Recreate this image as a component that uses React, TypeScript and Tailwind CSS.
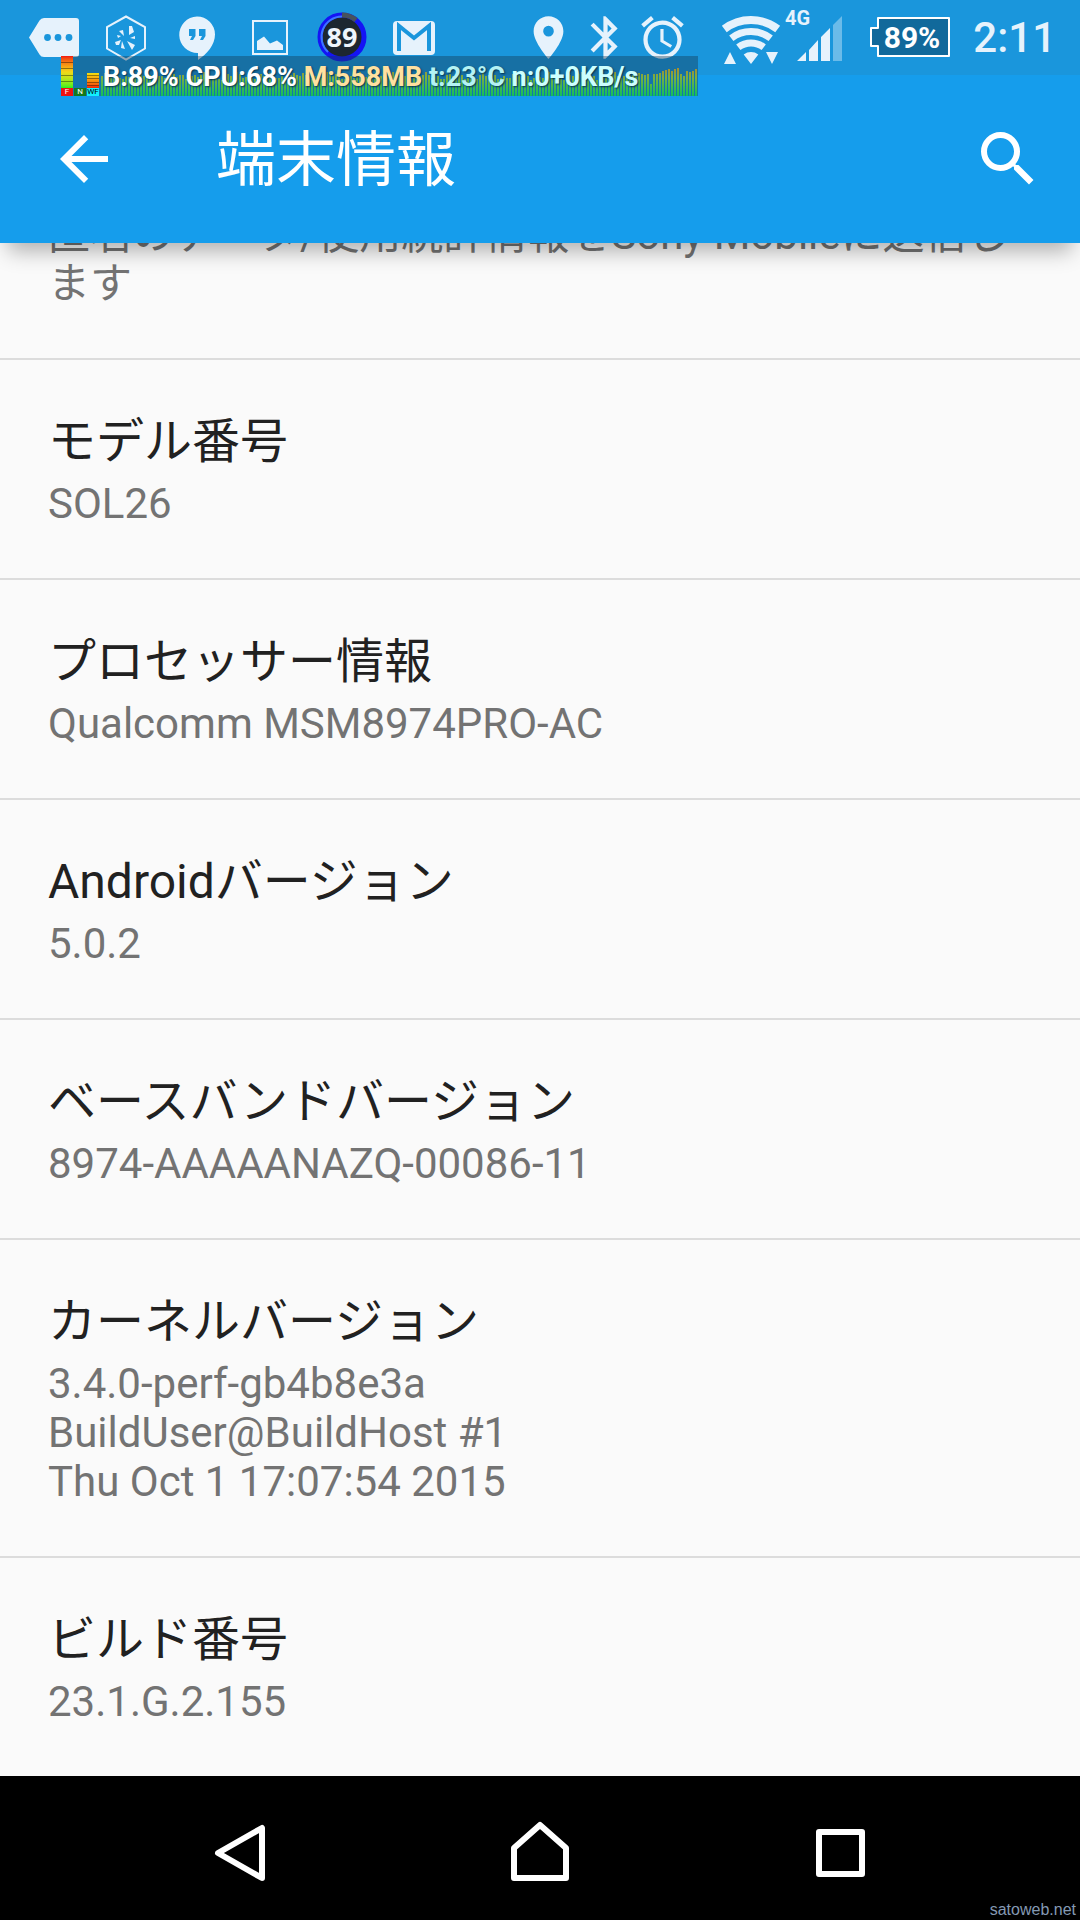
import { MdAlarm, MdArrowBack, MdBluetooth, MdLocationOn, MdSearch } from "react-icons/md";

const items = [
    { title: "モデル番号", lines: ["SOL26"] },
    { title: "プロセッサー情報", lines: ["Qualcomm MSM8974PRO-AC"] },
    { title: "Androidバージョン", lines: ["5.0.2"] },
    { title: "ベースバンドバージョン", lines: ["8974-AAAAANAZQ-00086-11"] },
    {
        title: "カーネルバージョン",
        lines: [
            "3.4.0-perf-gb4b8e3a",
            "BuildUser@BuildHost #1",
            "Thu Oct 1 17:07:54 2015",
        ],
    },
    { title: "ビルド番号", lines: ["23.1.G.2.155"] },
];

// cpu history, newest samples last
const recent = [
    20, 21, 21, 22, 22, 23, 22, 21, 22, 12, 22, 22, 23, 25, 26, 27, 25, 27, 28,
    22, 20, 25, 24, 25, 27,
];
const history = Array.from({ length: 174 }, (_, i) =>
    Math.round(20 + 2 * Math.sin(i * 1.7) + 2 * Math.sin(i * 0.6))
).concat(recent);

function Notifications() {
    return (
        <div className="flex pl-[18px] text-[#e6f2fc]">
            <svg width="72" height="75" fill="currentColor">
                <path d="M11 37.500 21.500 20.500Q23 18 26 18H58Q61 18 61 21V54Q61 57 58 57H26Q23 57 21.500 54.500Z" />
                <g fill="#1a96dc">
                    <circle cx="29.500" cy="37.500" r="3.400" />
                    <circle cx="40" cy="37.500" r="3.400" />
                    <circle cx="51" cy="37.500" r="3.400" />
                </g>
            </svg>
            <svg width="72" height="75" fill="currentColor">
                <path
                    d="M36 16.500 55 27V48.500L36 59.500 17 48.500V27Z"
                    fill="none"
                    stroke="currentColor"
                    strokeWidth="2"
                />
                <path d="M39 26H42L44 32 39 35ZM29 31 33 30 34 36ZM40 38 45 36V39ZM37 41 45 45 42 50ZM32 41 35 49 31 48ZM25 42 31 40 29 45H26ZM27 35 31 36 28 38Z" />
            </svg>
            <svg width="72" height="75" fill="currentColor">
                <path d="M35 16.500a18 18 0 0 1 18 18C53 45 45 54 36 60V53A18 18 0 0 1 35 16.500Z" />
                <path
                    fill="#1a96dc"
                    d="M27 29H33.500V36L31 40H28L30 36H27ZM37 29H43.500V36L41 40H38L40 36H37Z"
                />
            </svg>
            <svg width="72" height="75" fill="currentColor">
                <rect
                    x="19"
                    y="21"
                    width="34"
                    height="33"
                    fill="none"
                    stroke="currentColor"
                    strokeWidth="2"
                />
                <path d="M23 50V41L30 36.500 36 43.500 43 40.500 49 45V50Z" />
            </svg>
            <svg width="72" height="75">
                <circle cx="36" cy="37" r="22" fill="#1d2730" stroke="#1414f5" strokeWidth="5" />
                <path
                    d="M22 52A20.500 20.500 0 0 1 36 16.500"
                    fill="none"
                    stroke="#3c78ff"
                    strokeWidth="2"
                />
                <path
                    d="M36 15A22 22 0 0 1 50 20"
                    fill="none"
                    stroke="#47525c"
                    strokeWidth="5"
                />
                <text
                    x="36"
                    y="47"
                    textAnchor="middle"
                    className="fill-[#eef5fc] font-['Open_Sans',sans-serif] text-[27px] font-bold"
                >
                    89
                </text>
            </svg>
            <svg width="72" height="75" fill="currentColor">
                <rect x="15" y="21" width="42" height="34" rx="4" />
                <path
                    d="M21 51V26L36 38 51 26V51"
                    fill="none"
                    stroke="#1a96dc"
                    strokeWidth="4"
                />
            </svg>
        </div>
    );
}

function SystemIcons() {
    return (
        <div className="flex items-center pr-6 text-[#e6f2fc]">
            <div className="flex gap-1.5">
                <MdLocationOn size={51} />
                <MdBluetooth size={51} />
                <MdAlarm size={51} />
            </div>
            <svg width="66" height="75" fill="currentColor" className="ml-7">
                <g fill="none" stroke="currentColor">
                    <path d="M8.300 29A44 44 0 0 1 61.700 29" strokeWidth="8" />
                    <path d="M15.300 38.200A32.500 32.500 0 0 1 54.700 38.200" strokeWidth="7" />
                    <path d="M22.300 47.300A21 21 0 0 1 47.700 47.300" strokeWidth="7" />
                </g>
                <path d="M35 64 27.700 54.500A12 12 0 0 1 42.300 54.500ZM14 52 20 64H8ZM50 52H62L56 64Z" />
            </svg>
            <svg width="64" height="75" fill="currentColor">
                <text x="3" y="25" className="text-[20px] font-bold">
                    4G
                </text>
                <path d="M15 61 24 52V61ZM27 50 36 40V61H27ZM39 37 48 28V61H39Z" />
                <path d="M51 25 60 16V61H51Z" opacity="0.4" />
            </svg>
            <svg width="88" height="75" className="ml-5">
                <path
                    d="M12 18H83V56H12V46H5V28H12Z"
                    fill="#11699b"
                    stroke="white"
                    strokeWidth="2"
                    strokeLinejoin="round"
                />
                <text
                    x="46"
                    y="48"
                    textAnchor="middle"
                    className="fill-white text-[30px] font-bold"
                >
                    89%
                </text>
            </svg>
            <time className="ml-[19px] text-[42px] leading-[49px] font-medium">2:11</time>
        </div>
    );
}

function Meter({ label, bar, tag }: { label: string; bar: string; tag: string }) {
    return (
        <div className="flex w-3 flex-col justify-end">
            <div className={`flex flex-col justify-evenly ${bar}`}>
                {bar && [0, 1, 2, 3].map((i) => <div key={i} className="h-px bg-black/40" />)}
            </div>
            <div className={`flex h-2 justify-center text-[8px] leading-2 ${tag}`}>{label}</div>
        </div>
    );
}

function Monitor() {
    return (
        <div className="absolute top-14 left-[61px] flex h-10 gap-px bg-[#153850]/40">
            <Meter
                label="F"
                bar="h-8 bg-linear-to-b from-[#f01010] via-[#f0d818] to-[#10f020]"
                tag="bg-[#ee1111] text-white"
            />
            <Meter label="N" bar="" tag="bg-[#147a1e] text-white" />
            <Meter
                label="WF"
                bar="h-[15px] bg-linear-to-b from-[#f0e010] to-[#f01808]"
                tag="bg-[#10f0ff] text-black"
            />
            <div className="relative ml-px">
                <svg width="597" height="40">
                    <defs>
                        <linearGradient
                            id="load"
                            gradientUnits="userSpaceOnUse"
                            x1="0"
                            y1="10"
                            x2="0"
                            y2="40"
                        >
                            <stop offset="0" stopColor="#b0882c" />
                            <stop offset="0.4" stopColor="#76b044" />
                            <stop offset="1" stopColor="#10c05c" />
                        </linearGradient>
                    </defs>
                    {history.map((h, i) => (
                        <rect key={i} x={i * 3} y={40 - h} width="2" height={h} fill="url(#load)" />
                    ))}
                </svg>
                <div className="absolute top-1.5 left-0.5 text-[27px] leading-[30px] font-bold whitespace-nowrap text-white [text-shadow:1px_1px_2px_#00304a]">
                    B:89% CPU:68% <span className="text-[#ffe0a0]">M:558MB</span>{" "}
                    <span className="text-[#b4f2f4]">t:23°C</span>{" "}
                    <span className="text-[#ccffff]">n:0+0KB/s</span>
                </div>
            </div>
        </div>
    );
}

export default function App() {
    return (
        <div className="flex h-screen flex-col overflow-hidden bg-[#fafafa] font-[Roboto,'Noto_Sans_CJK_JP',sans-serif]">
            <header className="relative z-10 bg-[#159dec] shadow-[0_16px_20px_-8px_rgba(0,0,0,0.3)]">
                <div className="flex h-[75px] justify-between bg-[#1a96dc]">
                    <Notifications />
                    <SystemIcons />
                </div>
                <div className="flex h-42 items-center pr-9 pl-12 text-white">
                    <button aria-label="戻る">
                        <MdArrowBack size={72} />
                    </button>
                    <h1 className="ml-24 flex-1 pt-1 text-[60px] leading-[72px]">端末情報</h1>
                    <button aria-label="検索">
                        <MdSearch size={72} />
                    </button>
                </div>
                <Monitor />
            </header>

            {/* list is scrolled to its end */}
            <main className="flex min-h-0 flex-1 flex-col justify-end overflow-hidden">
                <div className="divide-y-2 divide-[#dcdcdc]">
                    <p className="px-12 pb-[50px] text-[42px] leading-[49px] text-[#737373]">
                        匿名のデータ/使用統計情報をSony Mobileに送信します
                    </p>
                    {items.map((item) => (
                        <section key={item.title} className="px-12 pt-12 pb-[50px]">
                            <h2 className="pb-1 text-[48px] leading-[67px] text-[#212121]">
                                {item.title}
                            </h2>
                            {item.lines.map((line) => (
                                <p
                                    key={line}
                                    className="text-[42px] leading-[49px] text-[#737373]"
                                >
                                    {line}
                                </p>
                            ))}
                        </section>
                    ))}
                </div>
            </main>

            <nav className="relative grid h-36 shrink-0 grid-cols-3 place-items-center bg-black px-[90px] text-white">
                <button aria-label="戻る">
                    <svg
                        width="72"
                        height="72"
                        fill="none"
                        stroke="currentColor"
                        strokeWidth="6"
                        strokeLinejoin="round"
                    >
                        <path d="M58 16V66L14 41Z" />
                    </svg>
                </button>
                <button aria-label="ホーム">
                    <svg
                        width="72"
                        height="72"
                        fill="none"
                        stroke="currentColor"
                        strokeWidth="6"
                        strokeLinejoin="round"
                    >
                        <path d="M36 13 62 36V66H10V36Z" />
                    </svg>
                </button>
                <button aria-label="履歴">
                    <svg
                        width="72"
                        height="72"
                        fill="none"
                        stroke="currentColor"
                        strokeWidth="6"
                        strokeLinejoin="round"
                    >
                        <path d="M15 20H58V62H15Z" />
                    </svg>
                </button>
                <a
                    href="#"
                    className="absolute right-1 bottom-0.5 font-['Liberation_Sans',sans-serif] text-base leading-4 text-[#8499b3]"
                >
                    satoweb.net
                </a>
            </nav>
        </div>
    );
}
